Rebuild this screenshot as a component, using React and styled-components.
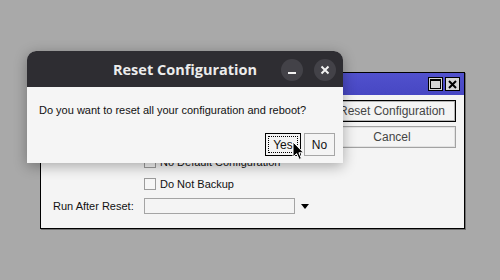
import React from 'react'
import styled, { createGlobalStyle } from 'styled-components'

const GlobalStyle = createGlobalStyle`
  html, body {
    margin: 0;
    padding: 0;
    background: #a9a9a9;
  }
  body {
    font-family: "Liberation Sans", Arial, sans-serif;
  }
`

const Desktop = styled.div`
  position: relative;
  width: 500px;
  height: 280px;
  overflow: hidden;
  background: #a9a9a9;
`

// bakre fönstret (winbox)
const Window = styled.div`
  position: absolute;
  left: 40px;
  top: 72px;
  width: 425px;
  height: 157px;
  box-sizing: border-box;
  border: 1px solid #000;
  box-shadow: 1px 1px 0 #6f6f6f;
  background: #f4f4f4;
  display: flex;
  flex-direction: column;
  font-size: 11px;
  color: #111;
`
const WinTitle = styled.div`
  height: 22px;
  background: linear-gradient(#5151cd, #4747c3);
  display: flex;
  align-items: center;
  justify-content: flex-end;
  gap: 2px;
  padding-right: 4px;
`
const WinBtn = styled.div`
  width: 15px;
  height: 14px;
  box-sizing: border-box;
  border: 1px solid #000;
  background: #d6d6d6;
  display: flex;
  align-items: center;
  justify-content: center;
`
const WinBody = styled.div`
  flex: 1;
  display: flex;
  justify-content: space-between;
  padding: 5px 8px 0 12px;
`
const Form = styled.div`
  display: grid;
  grid-template-columns: 91px auto;
  grid-auto-rows: 22px;
  align-items: center;
  padding-top: 51px;
`
const Label = styled.span`
  white-space: nowrap;
`
const CheckRow = styled.label`
  display: flex;
  align-items: center;
  gap: 4px;
  white-space: nowrap;
`
const Box = styled.span`
  width: 12px;
  height: 12px;
  box-sizing: border-box;
  border: 1px solid #9c9c9c;
  background: #f6f6f6;
`
const SelectRow = styled.div`
  display: flex;
  align-items: center;
  gap: 6px;
`
const Field = styled.div`
  width: 151px;
  height: 16px;
  box-sizing: border-box;
  border: 1px solid #a4a4a4;
  background: #f4f4f4;
`
const Arrow = styled.span`
  width: 0;
  height: 0;
  border-left: 4.5px solid transparent;
  border-right: 4.5px solid transparent;
  border-top: 5px solid #000;
`
const Side = styled.div`
  display: flex;
  flex-direction: column;
  gap: 4px;
`
const WinButton = styled.div`
  width: 128px;
  height: 22px;
  box-sizing: border-box;
  border: 1px solid ${p => (p.$default ? '#000' : '#a2a2a2')};
  box-shadow: inset 0 0 0 1px ${p => (p.$default ? '#b4b4b4' : '#e2e2e2')};
  background: #f4f4f4;
  color: #444;
  font-size: 12px;
  display: flex;
  align-items: center;
  justify-content: center;
`

// gnome-dialogen ovanpå
const Dialog = styled.div`
  position: absolute;
  left: 27px;
  top: 51px;
  width: 316px;
  border-radius: 9px 9px 0 0;
  background: #f5f5f5;
  box-shadow: 0 3px 14px rgba(0, 0, 0, 0.32);
  overflow: hidden;
`
const DlgHead = styled.div`
  height: 36px;
  background: #2e2d32;
  display: flex;
  align-items: center;
  position: relative;
  justify-content: center;
`
const DlgTitle = styled.h1`
  margin: 0;
  font-family: "Open Sans", "Noto Sans", sans-serif;
  font-weight: 700;
  font-size: 14.5px;
  color: #ececec;
`
const HeadControls = styled.div`
  position: absolute;
  right: 7px;
  top: 8px;
  display: flex;
  gap: 11px;
`
const Round = styled.div`
  width: 22px;
  height: 22px;
  border-radius: 50%;
  background: #434248;
  display: flex;
  align-items: center;
  justify-content: center;
`
const DlgBody = styled.div`
  padding: 17px 8px 7px 12px;
  font-size: 11px;
  color: #111;
`
const Question = styled.p`
  margin: 0;
  line-height: 13px;
`
const Buttons = styled.div`
  display: flex;
  justify-content: flex-end;
  gap: 3px;
  margin-top: 16px;
`
const DlgButton = styled.div`
  position: relative;
  width: ${p => p.$w}px;
  height: 23px;
  box-sizing: border-box;
  border: 1px solid ${p => (p.$focus ? '#000' : '#a6a6a6')};
  background: #f4f4f4;
  font-size: 12px;
  display: flex;
  align-items: center;
  justify-content: center;
  &::after {
    content: '';
    display: ${p => (p.$focus ? 'block' : 'none')};
    position: absolute;
    inset: 2px;
    border: 1px dotted #000;
  }
`
const Cursor = styled.svg`
  position: absolute;
  left: 292px;
  top: 141px;
`

function App() {
  return (
    <>
      <GlobalStyle />
      <Desktop>
        <Window>
          <WinTitle>
            <WinBtn>
              <svg width="11" height="10" viewBox="0 0 11 10">
                <rect x="0.5" y="0.5" width="10" height="9" fill="none" stroke="#000" />
                <rect x="0" y="0" width="11" height="2" fill="#000" />
              </svg>
            </WinBtn>
            <WinBtn>
              <svg width="9" height="9" viewBox="0 0 9 9">
                <path d="M1 1 L8 8 M8 1 L1 8" stroke="#000" strokeWidth="2" />
              </svg>
            </WinBtn>
          </WinTitle>
          <WinBody>
            <Form>
              <span />
              <CheckRow><Box />No Default Configuration</CheckRow>
              <span />
              <CheckRow><Box />Do Not Backup</CheckRow>
              <Label>Run After Reset:</Label>
              <SelectRow>
                <Field />
                <Arrow />
              </SelectRow>
            </Form>
            <Side>
              <WinButton $default>Reset Configuration</WinButton>
              <WinButton>Cancel</WinButton>
            </Side>
          </WinBody>
        </Window>

        <Dialog>
          <DlgHead>
            <DlgTitle>Reset Configuration</DlgTitle>
            <HeadControls>
              <Round>
                <svg width="10" height="10" viewBox="0 0 10 10">
                  <rect x="1" y="7" width="8" height="2" fill="#f2f2f2" />
                </svg>
              </Round>
              <Round>
                <svg width="10" height="10" viewBox="0 0 10 10">
                  <path d="M1.5 1.5 L8.5 8.5 M8.5 1.5 L1.5 8.5" stroke="#f2f2f2" strokeWidth="2" />
                </svg>
              </Round>
            </HeadControls>
          </DlgHead>
          <DlgBody>
            <Question>Do you want to reset all your configuration and reboot?</Question>
            <Buttons>
              <DlgButton $w={36} $focus>Yes</DlgButton>
              <DlgButton $w={31}>No</DlgButton>
            </Buttons>
          </DlgBody>
        </Dialog>

        <Cursor width="13" height="20" viewBox="0 0 13 20">
          <path d="M1 1 L1 16 L4.6 12.6 L7.2 18.4 L9.4 17.4 L6.9 11.8 L11.6 11.8 Z" fill="#000" stroke="#fff" strokeWidth="1" strokeLinejoin="round" />
        </Cursor>
      </Desktop>
    </>
  )
}

export default App
